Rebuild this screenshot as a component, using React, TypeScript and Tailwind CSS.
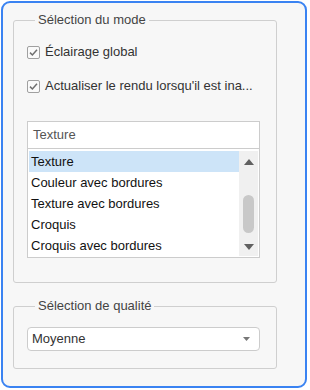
import React from 'react';

const modes = ['Texture', 'Couleur avec bordures', 'Texture avec bordures', 'Croquis', 'Croquis avec bordures'];

const Check = ({ label }: { label: string }) => (
    <label className="flex items-center h-4 gap-[5px] text-[13px] leading-4 text-[#333] whitespace-nowrap overflow-hidden">
        <span className="shrink-0 w-[13px] h-[13px] border border-[#a0a0a0] rounded-[2px] bg-[#fafafa] flex items-center justify-center">
            <svg width="9" height="9" viewBox="0 0 9 9">
                <path d="M1 4.6 L3.4 7 L8 1.8" fill="none" stroke="#6f6f6f" strokeWidth="1.5" />
            </svg>
        </span>
        <span>{label}</span>
    </label>
);

const Triangle = ({ down, color = '#606060' }: { down?: boolean; color?: string }) => (
    <svg width="10" height="6" viewBox="0 0 10 6">
        <path d={down ? 'M0 0 H10 L5 6 Z' : 'M0 6 H10 L5 0 Z'} fill={color} />
    </svg>
);

export default function App() {
    return (
        <div className="m-px w-[306px] h-[387px] border-2 border-[#3a83f2] rounded-[9px] bg-[#f7f7f7] px-[10px] pt-[9px]" style={{ fontFamily: '"Liberation Sans", Arial, sans-serif' }}>
            {/* Mode */}
            <fieldset className="w-[264px] border border-[#cfcfcf] rounded-[3px] px-[13px] pb-[24px]">
                <legend className="ml-[8px] px-[3px] text-[13px] leading-4 text-[#444]">Sélection du mode</legend>
                <div className="mt-4 flex flex-col gap-[18px]">
                    <Check label="Éclairage global" />
                    <Check label="Actualiser le rendu lorsqu'il est ina..." />
                </div>
                <div className="mt-[27px] w-[233px]">
                    <div className="h-[28px] border border-[#cccccc] bg-white pl-[5px] flex items-center text-[13px] text-[#555]">Texture</div>
                    <div className="border border-t-0 border-[#cccccc] bg-white p-px flex">
                        <div className="flex-1 flex flex-col pt-px">
                            {modes.map((m, i) => (
                                <div key={m} className={`h-[21px] pl-[2px] flex items-center text-[13px] text-[#111] ${i === 0 ? 'bg-[#cde4f8]' : ''}`}>{m}</div>
                            ))}
                        </div>
                        <div className="w-[19px] bg-[#f0f0f0] flex flex-col items-center pt-[8px] pb-[6px] mt-px">
                            <Triangle />
                            <div className="mt-[30px] w-[11px] h-[38px] rounded-full bg-[#c8c8c8]" />
                            <div className="mt-auto"><Triangle down /></div>
                        </div>
                    </div>
                </div>
            </fieldset>

            {/* Qualité */}
            <fieldset className="w-[264px] mt-[15px] border border-[#cfcfcf] rounded-[3px] px-[13px] pb-[17px]">
                <legend className="ml-[8px] px-[3px] text-[13px] leading-4 text-[#444]">Sélection de qualité</legend>
                <div className="mt-[13px] w-[233px] h-[24px] border border-[#cccccc] rounded-[4px] bg-white pl-[4px] pr-[9px] flex items-center justify-between text-[13px] text-[#333]">
                    <span>Moyenne</span>
                    <svg width="7" height="4" viewBox="0 0 7 4"><path d="M0 0 H7 L3.5 4 Z" fill="#777" /></svg>
                </div>
            </fieldset>
        </div>
    );
}
